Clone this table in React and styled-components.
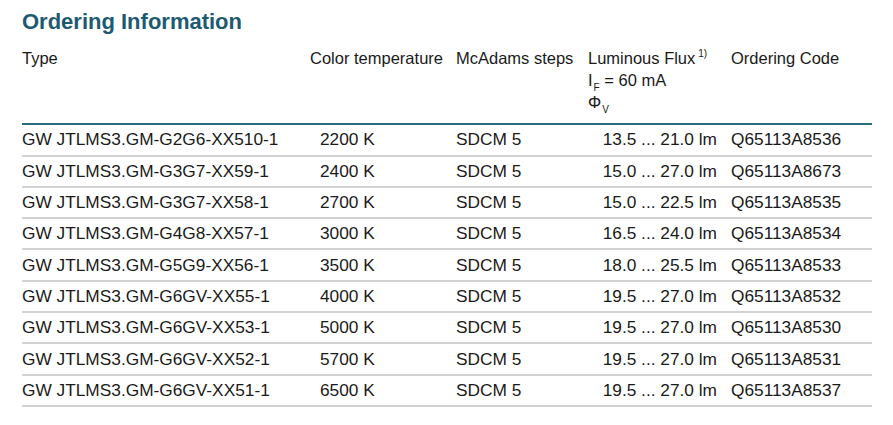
import React from "react";
import styled, { createGlobalStyle } from "styled-components";

const Global = createGlobalStyle`
  html, body { margin: 0; padding: 0; background: #ffffff; }
  body { font-family: "Liberation Sans", Arial, sans-serif; color: #1a1a1a; }
`;

const Page = styled.div`
  padding: 9px 21px 0 22px;
  width: 850px;
`;

const Title = styled.h2`
  margin: 0;
  font-size: 22px;
  line-height: 26px;
  font-weight: 700;
  color: #1d5a71;
`;

const Table = styled.div`
  margin-top: 11.6px;
  display: grid;
  grid-template-columns: 288px 146px 132px 143px 141px;
  font-size: 17.3px;
`;

const HeadCell = styled.div`
  font-size: 16.5px;
  line-height: 22px;
  padding-bottom: 10.7px;
  border-bottom: 2px solid #2d6b80;
  white-space: nowrap;
`;

const Cell = styled.div`
  height: 29.3px;
  display: flex;
  align-items: center;
  justify-content: ${(p) => (p.$right ? "flex-end" : "flex-start")};
  padding-left: ${(p) => p.$indent || 0}px;
  padding-right: ${(p) => (p.$right ? 14 : 0)}px;
  border-bottom: 2px solid #d2d2d2;
  white-space: nowrap;
`;

const Sub = styled.sub`
  font-size: 10px;
  vertical-align: -5px;
  line-height: 0;
  margin-left: 1px;
`;

const Sup = styled.sup`
  font-size: 10px;
  vertical-align: 7px;
  line-height: 0;
  margin-left: 3px;
`;

const rows = [
  ["GW JTLMS3.GM-G2G6-XX510-1", "2200 K", "13.5 ... 21.0 lm", "Q65113A8536"],
  ["GW JTLMS3.GM-G3G7-XX59-1", "2400 K", "15.0 ... 27.0 lm", "Q65113A8673"],
  ["GW JTLMS3.GM-G3G7-XX58-1", "2700 K", "15.0 ... 22.5 lm", "Q65113A8535"],
  ["GW JTLMS3.GM-G4G8-XX57-1", "3000 K", "16.5 ... 24.0 lm", "Q65113A8534"],
  ["GW JTLMS3.GM-G5G9-XX56-1", "3500 K", "18.0 ... 25.5 lm", "Q65113A8533"],
  ["GW JTLMS3.GM-G6GV-XX55-1", "4000 K", "19.5 ... 27.0 lm", "Q65113A8532"],
  ["GW JTLMS3.GM-G6GV-XX53-1", "5000 K", "19.5 ... 27.0 lm", "Q65113A8530"],
  ["GW JTLMS3.GM-G6GV-XX52-1", "5700 K", "19.5 ... 27.0 lm", "Q65113A8531"],
  ["GW JTLMS3.GM-G6GV-XX51-1", "6500 K", "19.5 ... 27.0 lm", "Q65113A8537"],
];

export default function App() {
  return (
    <>
      <Global />
      <Page>
        <Title>Ordering Information</Title>
        <Table>
          <HeadCell>Type</HeadCell>
          <HeadCell>Color temperature</HeadCell>
          <HeadCell>McAdams steps</HeadCell>
          <HeadCell>
            Luminous Flux<Sup>1)</Sup>
            <br />
            I<Sub>F</Sub> = 60 mA
            <br />
            Φ<Sub>V</Sub>
          </HeadCell>
          <HeadCell>Ordering Code</HeadCell>
          {rows.map((r) => (
            <React.Fragment key={r[3]}>
              <Cell>{r[0]}</Cell>
              <Cell $indent={10}>{r[1]}</Cell>
              <Cell>SDCM 5</Cell>
              <Cell $right>{r[2]}</Cell>
              <Cell>{r[3]}</Cell>
            </React.Fragment>
          ))}
        </Table>
      </Page>
    </>
  );
}
